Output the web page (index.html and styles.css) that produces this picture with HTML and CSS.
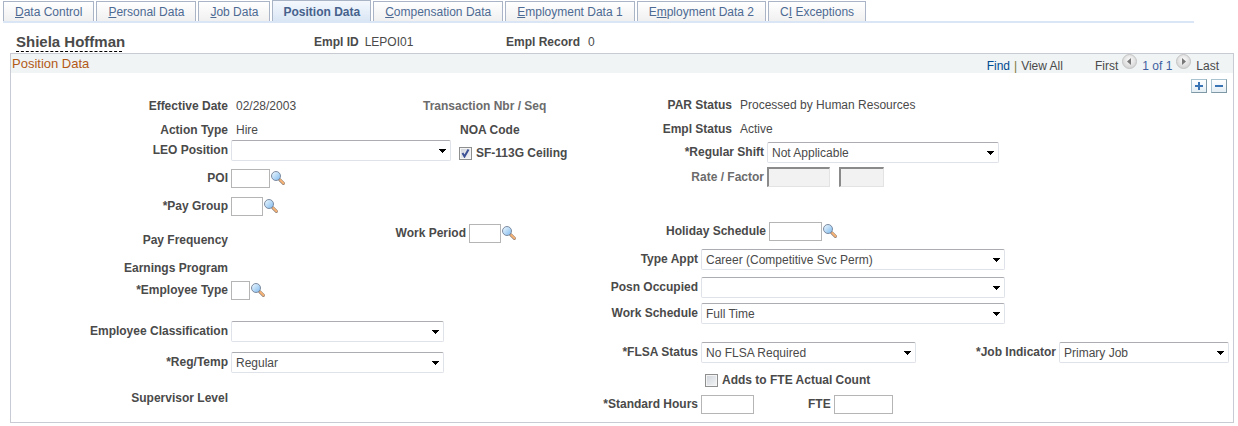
FILE: index.html
```html
<!DOCTYPE html>
<html lang="en">
<head>
<meta charset="utf-8">
<title>Position Data</title>
<link rel="stylesheet" href="styles.css">
</head>
<body>
<svg class="sprite" aria-hidden="true">
  <defs>
    <linearGradient id="lens" x1="0" y1="0" x2="1" y2="1"><stop offset="0" stop-color="#f2faff"/><stop offset="1" stop-color="#7db9ee"/></linearGradient>
    <radialGradient id="disc" cx=".5" cy=".4" r=".6"><stop offset="0" stop-color="#fdfdfd"/><stop offset="1" stop-color="#d2d2d2"/></radialGradient>
    <symbol id="lookup" viewBox="0 0 14 14">
      <path d="M8.6 8.6 12.4 12.4" stroke="#8a7d78" stroke-width="3" stroke-linecap="round"/>
      <path d="M9.2 9 12.5 12.3" stroke="#f6b375" stroke-width="2" stroke-linecap="round"/>
      <circle cx="5" cy="5" r="4.500" fill="url(#lens)" stroke="#7d8ba0"/>
    </symbol>
    <symbol id="prev" viewBox="0 0 15 15"><circle cx="7.5" cy="7.5" r="7" fill="url(#disc)" stroke="#c4c4c4"/><path d="M9 4v7L5 7.500z" fill="#777"/></symbol>
    <symbol id="next" viewBox="0 0 15 15"><circle cx="7.5" cy="7.5" r="7" fill="url(#disc)" stroke="#c4c4c4"/><path d="M6 4v7l4-3.500z" fill="#777"/></symbol>
  </defs>
</svg>

<nav class="tabs">
  <a class="tab" href="#"><u>D</u>ata Control</a>
  <a class="tab" href="#"><u>P</u>ersonal Data</a>
  <a class="tab" href="#"><u>J</u>ob Data</a>
  <a class="tab tab-active" href="#" aria-current="page">Position Data</a>
  <a class="tab" href="#"><u>C</u>ompensation Data</a>
  <a class="tab" href="#"><u>E</u>mployment Data 1</a>
  <a class="tab" href="#">E<u>m</u>ployment Data 2</a>
  <a class="tab" href="#">C<u>I</u> Exceptions</a>
</nav>

<header class="person">
  <h1 class="person-name">Shiela Hoffman</h1>
  <div class="person-id"><b>Empl ID</b><span>LEPOI01</span></div>
  <div class="person-record"><b>Empl Record</b><span>0</span></div>
</header>

<main class="panel">
  <div class="panel-head">
    <h2 class="panel-title">Position Data</h2>
    <div class="pager">
      <a class="find" href="#">Find</a><i class="bar">|</i><span>View All</span>
      <span class="first">First</span>
      <button class="round" aria-label="Previous"><svg><use href="#prev"/></svg></button>
      <span class="count">1 of 1</span>
      <button class="round" aria-label="Next"><svg><use href="#next"/></svg></button>
      <span>Last</span>
    </div>
  </div>

  <div class="row-tools">
    <button class="tool" aria-label="Add row"><svg viewBox="0 0 8 8"><path d="M0 4h8M4 0v8"/></svg></button>
    <button class="tool" aria-label="Delete row"><svg viewBox="0 0 8 8"><path d="M0 4h8"/></svg></button>
  </div>

  <form class="fields">
    <div class="col-left">
      <div class="row"><span class="label">Effective Date</span><span class="value value-date">02/28/2003</span><span class="label-plain dim">Transaction Nbr / Seq</span></div>
      <div class="row gap-9"><span class="label">Action Type</span><span class="value value-action">Hire</span><span class="label-plain">NOA Code</span></div>
      <div class="row gap-2"><label class="label" for="leo">LEO Position</label><select class="select w-220" id="leo"><option></option></select>
        <span class="check check-ceiling"><input type="checkbox" id="ceiling" checked><label for="ceiling">SF-113G Ceiling</label></span></div>
      <div class="row gap-8"><label class="label" for="poi">POI</label><input class="text w-39" id="poi"><button type="button" class="lookup" aria-label="Look up POI"><svg><use href="#lookup"/></svg></button></div>
      <div class="row gap-9"><label class="label" for="pay">*Pay Group</label><input class="text w-32" id="pay"><button type="button" class="lookup" aria-label="Look up Pay Group"><svg><use href="#lookup"/></svg></button></div>
      <div class="row row-period gap-8"><span class="label label-low">Pay Frequency</span><label class="label-period" for="period">Work Period</label><input class="text w-32" id="period"><button type="button" class="lookup" aria-label="Look up Work Period"><svg><use href="#lookup"/></svg></button></div>
      <div class="row gap-13"><span class="label">Earnings Program</span></div>
      <div class="row gap-5"><label class="label" for="etype">*Employee Type</label><input class="text w-19" id="etype"><button type="button" class="lookup" aria-label="Look up Employee Type"><svg><use href="#lookup"/></svg></button></div>
      <div class="row gap-21"><label class="label" for="eclass">Employee Classification</label><select class="select w-213" id="eclass"><option></option></select></div>
      <div class="row gap-10"><label class="label" for="reg">*Reg/Temp</label><select class="select w-213" id="reg"><option>Regular</option></select></div>
      <div class="row gap-18"><span class="label">Supervisor Level</span></div>
    </div>

    <div class="col-right">
      <div class="row status"><span class="label">PAR Status</span><span class="value">Processed by Human Resources</span></div>
      <div class="row status gap-9"><span class="label">Empl Status</span><span class="value">Active</span></div>
      <div class="row shift gap-5"><label class="label" for="shift">*Regular Shift</label><select class="select w-232" id="shift"><option>Not Applicable</option></select></div>
      <div class="row shift dim gap-4"><label class="label" for="rate">Rate / Factor</label><input class="text sunken w-63" id="rate" disabled><input class="text sunken factor w-45" aria-label="Factor" disabled></div>
      <div class="row holiday gap-35"><label class="label" for="holiday">Holiday Schedule</label><input class="text w-53" id="holiday"><button type="button" class="lookup" aria-label="Look up Holiday Schedule"><svg><use href="#lookup"/></svg></button></div>
      <div class="row gap-8"><label class="label" for="appt">Type Appt</label><select class="select w-304" id="appt"><option>Career (Competitive Svc Perm)</option></select></div>
      <div class="row gap-7"><label class="label" for="posn">Posn Occupied</label><select class="select w-304" id="posn"><option></option></select></div>
      <div class="row gap-5"><label class="label" for="sched">Work Schedule</label><select class="select w-304" id="sched"><option>Full Time</option></select></div>
      <div class="row gap-18"><label class="label" for="flsa">*FLSA Status</label><select class="select w-215" id="flsa"><option>No FLSA Required</option></select>
        <label class="label-job" for="job">*Job Indicator</label><select class="select w-170" id="job"><option>Primary Job</option></select></div>
      <div class="row gap-10"><span class="check check-fte"><input type="checkbox" id="adds"><label for="adds">Adds to FTE Actual Count</label></span></div>
      <div class="row gap-7"><label class="label" for="hours">*Standard Hours</label><input class="text w-53" id="hours"><label class="label-fte" for="fte">FTE</label><input class="text w-59" id="fte"></div>
    </div>
  </form>
</main>
</body>
</html>
```
FILE: styles.css
```css
* { box-sizing: border-box; }
body {
  margin: 0;
  background: #fff;
  color: #4a4a4a;
  font: 12px/15px "Liberation Sans", Arial, sans-serif;
}
h1, h2 { margin: 0; }
input, select, button { margin: 0; padding: 0; font: inherit; color: inherit; }
button { border: 0; background: none; }
.sprite { position: absolute; width: 0; height: 0; }

/* Page tabs */
.tabs {
  display: flex;
  align-items: flex-end;
  gap: 2px;
  height: 23px;
  margin: 0 44px 0 3px;
  border-bottom: 2px solid #dae6f5;
}
.tab {
  height: 20px;
  padding: 3px 11px 0;
  border: 1px solid #a9b4c6;
  border-bottom: 0;
  background: linear-gradient(#fff, #f0f0f0);
  color: #4d6a93;
  text-decoration: none;
  white-space: nowrap;
}
.tab-active {
  height: 21px;
  padding: 4px 10px 0;
  background: linear-gradient(#f4f8fd, #dae6f5);
  color: #46618c;
  font-weight: bold;
}

/* Employee heading */
.person { display: flex; align-items: center; height: 30px; padding-left: 16px; }
.person-name {
  width: 106px;
  margin-top: 8px;
  border-bottom: 1px dashed #000;
  font-size: 15px;
  line-height: 18px;
  white-space: nowrap;
}
.person-id { display: flex; gap: 6px; width: 192px; margin: 9px 0 0 192px; }
.person-record { display: flex; gap: 8px; margin-top: 9px; }

/* Panel */
.panel { margin: 0 4px 0 10px; border: 1px solid #c8cbd3; padding-bottom: 8px; }
.panel-head {
  display: flex;
  justify-content: space-between;
  height: 19px;
  padding: 2px 14px 0 1px;
  background: #f0f4f5;
}
.panel-title { font-size: 13px; font-weight: normal; line-height: 15px; color: #b35a17; }
.pager { display: flex; padding-top: 3px; }
.find { color: #004b91; text-decoration: none; }
.bar { margin: 0 4px; font-style: normal; color: #7c7a3a; }
.first { margin-left: 32px; }
.round { width: 15px; height: 15px; margin: -5px 5px 0 4px; }
.round svg { display: block; width: 15px; height: 15px; }
.count { color: #3f5f9f; }
.row-tools { display: flex; justify-content: flex-end; gap: 4px; height: 24px; padding: 6px 6px 0 0; }
.tool {
  display: grid;
  place-items: center;
  width: 16px;
  height: 14px;
  border: 1px solid #7e98a6;
  border-top-color: #a9c3d0;
  border-left-color: #a9c3d0;
  background: linear-gradient(#fff, #e4eef4);
}
.tool svg { width: 8px; height: 8px; stroke: #3a74b5; stroke-width: 2; }

/* Form */
.fields { display: flex; }
.col-left { flex: none; width: 589px; padding-top: 2px; }
.col-right { flex: 1; padding: 1px 4px 0 0; }
.row { display: flex; align-items: center; white-space: nowrap; }
.label { flex: none; width: 217px; margin-right: 3px; text-align: right; }
.label, .label-plain, .label-period, .label-job, .label-fte, .check { font-weight: bold; }
.col-right .label { width: 98px; }
.col-right .shift .label { width: 164px; }
.col-right .holiday .label { width: 166px; }
.col-right .status .label { width: 132px; }
.value { padding-left: 5px; }
.value-date { width: 192px; }
.value-action { width: 229px; }
.dim { color: #6c6c6c; }
.row-period { height: 24px; align-items: flex-start; }
.label-low { align-self: flex-end; }
.label-period { width: 235px; margin: 2px 3px 0 0; text-align: right; }
.label-job { margin: 0 3px 0 auto; }
.label-fte { margin: 0 3px 0 54px; }

.gap-2 { margin-top: 2px; }
.gap-4 { margin-top: 4px; }
.gap-5 { margin-top: 5px; }
.gap-7 { margin-top: 7px; }
.gap-8 { margin-top: 8px; }
.gap-9 { margin-top: 9px; }
.gap-10 { margin-top: 10px; }
.gap-13 { margin-top: 13px; }
.gap-18 { margin-top: 18px; }
.gap-21 { margin-top: 21px; }
.gap-35 { margin-top: 35px; }

.w-19 { width: 19px; }
.w-32 { width: 32px; }
.w-39 { width: 39px; }
.w-45 { width: 45px; }
.w-53 { width: 53px; }
.w-59 { width: 59px; }
.w-63 { width: 63px; }
.w-170 { width: 170px; }
.w-213 { width: 213px; }
.w-215 { width: 215px; }
.w-220 { width: 220px; }
.w-232 { width: 232px; }
.w-304 { width: 304px; }

.select {
  appearance: none;
  height: 21px;
  padding: 1px 18px 0 4px;
  border: 1px solid #e0e2ea;
  border-top-color: #abadb3;
  border-radius: 2px;
  background: #fff url("data:image/svg+xml,%3Csvg xmlns='http://www.w3.org/2000/svg' width='7' height='4' shape-rendering='crispEdges'%3E%3Cpath d='M0 0h7v1H0zM1 1h5v1H1zM2 2h3v1H2zM3 3h1v1H3z'/%3E%3C/svg%3E") no-repeat right 4px center;
}
.text { height: 19px; border: 1px solid #b5b5b5; background: #fff; }
.sunken {
  height: 20px;
  border: 1px solid #e3e3e3;
  border-top: 2px solid #8a8a8a;
  border-left: 2px solid #8a8a8a;
  background: #f2f2f2;
}
.factor { margin-left: 9px; }
.lookup { width: 14px; height: 14px; margin: 0 0 2px 1px; }
.row-period .lookup { margin-top: 2px; }
.lookup svg { display: block; width: 14px; height: 14px; }

.check { display: flex; align-items: center; gap: 4px; }
.check input {
  appearance: none;
  width: 13px;
  height: 13px;
  border: 1px solid #8e8f8f;
  outline: 1px solid #f4f4f4;
  outline-offset: -2px;
  background: linear-gradient(135deg, #cfd4db, #f4f5f6);
}
.check input:checked {
  background: url("data:image/svg+xml,%3Csvg xmlns='http://www.w3.org/2000/svg' width='11' height='11'%3E%3Cpath d='M2.500 5 4.500 8.500 8.500 1.500' fill='none' stroke='%233c5095' stroke-width='2'/%3E%3C/svg%3E"), linear-gradient(135deg, #cfd4db, #f4f5f6);
}
.check-ceiling { margin: 5px 0 0 8px; }
.check-fte { margin-left: 105px; }
```
